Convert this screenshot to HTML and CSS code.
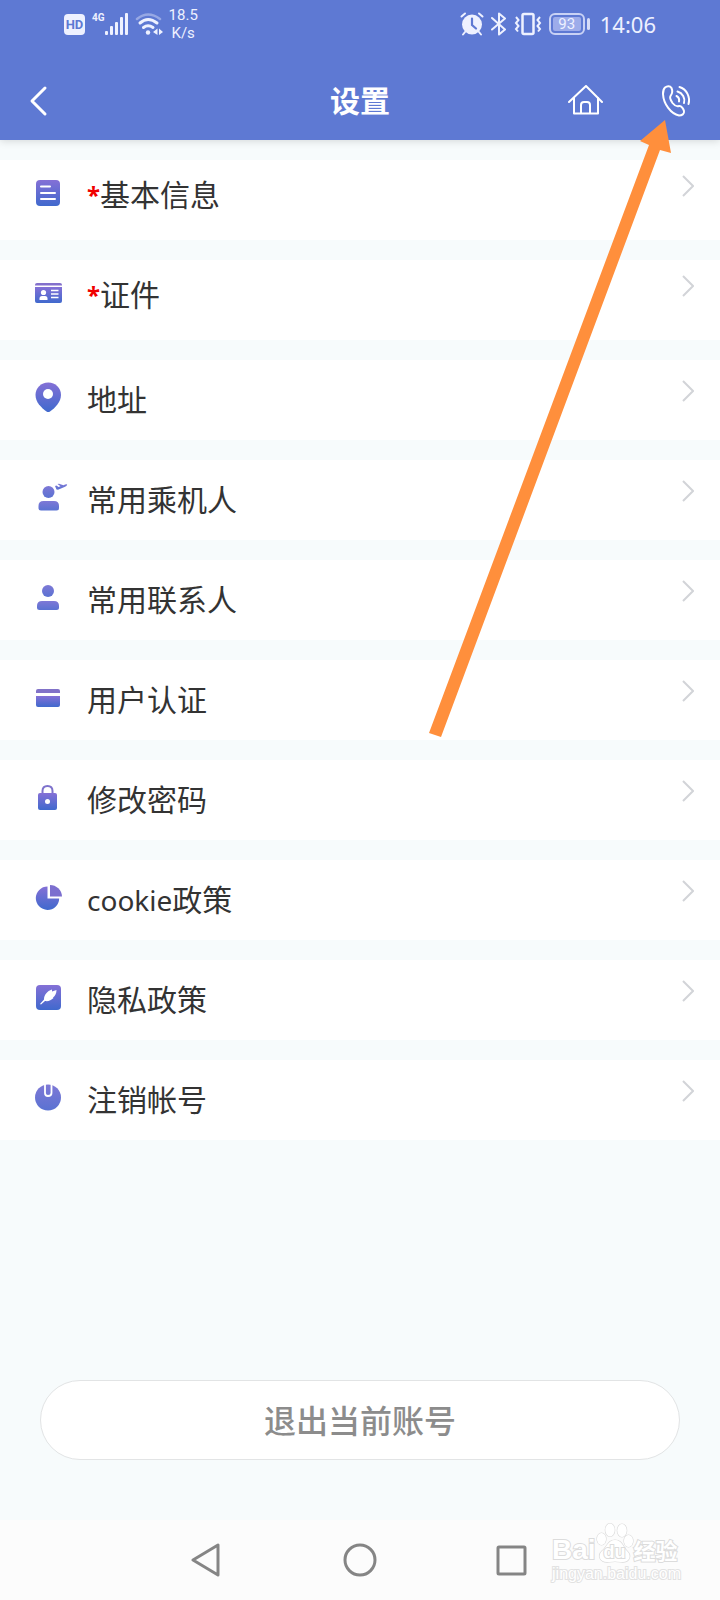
FILE: index.html
```html
<!DOCTYPE html>
<html lang="zh-CN">
<head>
    <meta charset="utf-8">
    <meta name="viewport" content="width=device-width, initial-scale=1">
    <title>设置</title>
    <link rel="stylesheet" href="styles.css">
</head>
<body>
    <!-- shared gradient for the list icons -->
    <svg class="defs" width="0" height="0" aria-hidden="true">
        <defs>
            <linearGradient id="grad" x1="0" y1="0" x2="0" y2="1">
                <stop offset="0" stop-color="#8470d6"/>
                <stop offset="1" stop-color="#4069cd"/>
            </linearGradient>
            <linearGradient id="soft" x1="0" y1="0" x2="0" y2="1">
                <stop offset="0" stop-color="#7e78d6"/>
                <stop offset="1" stop-color="#5a72d2"/>
            </linearGradient>
        </defs>
    </svg>

    <header class="header">
        <div class="status">
            <div class="status-left">
                <span class="hd">HD</span>
                <span class="net">4G</span>
                <svg class="signal" width="24" height="22" viewBox="0 0 24 22" fill="#eef1ff">
                    <rect x="0" y="18" width="3" height="4" rx="1"/>
                    <rect x="5" y="13" width="3" height="9" rx="1"/>
                    <rect x="10" y="9" width="3" height="13" rx="1"/>
                    <rect x="15" y="4" width="3" height="18" rx="1"/>
                    <rect x="20" y="0" width="3" height="22" rx="1"/>
                </svg>
                <svg class="wifi" width="28" height="22" viewBox="0 0 28 22" fill="none" stroke="#eef1ff" stroke-width="3" stroke-linecap="round">
                    <path d="M2 6Q13 -3 25 6" stroke-opacity=".4" stroke-width="2.5"/>
                    <path d="M5 10Q13 3 22 10"/>
                    <path d="M8.500 14.500Q13 11 18 14.500"/>
                    <circle cx="13" cy="19.500" r="2.200" fill="#eef1ff" stroke="none"/>
                    <path d="M22.500 15.500V22L18 19zM24 15.500V22L28 19z" fill="#eef1ff" stroke="none"/>
                </svg>
                <span class="speed">18.5<br>K/s</span>
            </div>
            <div class="status-right">
                <svg width="24" height="24" viewBox="0 0 24 24" fill="none" stroke="#eef1ff" stroke-width="2" stroke-linecap="round">
                    <circle cx="12" cy="12.500" r="10" fill="#eef1ff" stroke="none"/>
                    <path d="M1.500 4.500L5 1.500M19 1.500L22.500 4.500M5 20L3 22.500M19 20L21 22.500"/>
                    <path d="M12 6.500V13L16 16.500" stroke="#5e79d3" stroke-width="2.200"/>
                </svg>
                <svg width="16" height="24" viewBox="0 0 16 24" fill="none" stroke="#eef1ff" stroke-width="2" stroke-linejoin="round" stroke-linecap="round">
                    <path d="M1 6L14 17.500L8 22.500V1.500L14 6.500L1 17.500"/>
                </svg>
                <svg width="28" height="24" viewBox="0 0 28 24" fill="none" stroke="#eef1ff" stroke-width="2">
                    <rect x="8.500" y="2" width="11" height="20" rx="1.500" stroke-width="2.500"/>
                    <path d="M2 5L4.500 8L2 11L4.500 14L2 17L4 19.500" stroke-width="2"/>
                    <path d="M26 5L23.500 8L26 11L23.500 14L26 17L24 19.500" stroke-width="2"/>
                </svg>
                <span class="battery"><span class="level">93</span></span>
                <span class="time">14:06</span>
            </div>
        </div>
        <nav class="titlebar">
            <button class="icon-btn back" type="button" aria-label="返回">
                <svg width="20" height="32" viewBox="0 0 20 32" fill="none" stroke="#fff" stroke-width="3" stroke-linecap="round" stroke-linejoin="round">
                    <path d="M17 3L4 16L17 29"/>
                </svg>
            </button>
            <h1 class="title">设置</h1>
            <div class="actions">
                <a class="icon-btn" href="#" aria-label="首页">
                    <svg width="36" height="32" viewBox="0 0 36 32" fill="none" stroke="#fff" stroke-width="2" stroke-linejoin="round" stroke-linecap="round">
                        <path d="M1 17L18 1L34 17"/>
                        <path d="M6 13V28.500H30V13"/>
                        <path d="M13 28V20Q13 17 16 17H19Q22 17 22 20V28"/>
                    </svg>
                </a>
                <a class="icon-btn" href="#" aria-label="客服电话">
                    <svg width="30" height="32" viewBox="0 0 30 32" fill="none" stroke="#fff" stroke-width="2" stroke-linecap="round" stroke-linejoin="round">
                        <path d="M3 2.500C5 .8 8 .5 9.500 3C10.800 6 10.500 8.500 8.500 11C7.500 12.500 8.500 15 10.500 18C12.500 20.500 14.500 22 17 21C19.500 20.500 21.500 24 22 26C22.500 29 20 30.500 17 30.500C9 29 1.500 19 1 9C1 6.500 1.300 4 3 2.500Z"/>
                        <path d="M14.500 11C16.500 12 17.500 14 17 16.500"/>
                        <path d="M15.500 6.500C20.500 8 23.500 13 22 18"/>
                        <path d="M17.500 2C24.500 4 28.500 12 26.500 19"/>
                    </svg>
                </a>
            </div>
        </nav>
    </header>

    <main class="main">
        <ul class="list">
            <li>
                <a class="item required" href="#">
                    <svg class="icon" viewBox="0 0 40 40">
                        <rect x="8" y="7" width="24" height="26" rx="4" fill="url(#grad)"/>
                        <path d="M13 13.500H22M13 20H27M13 26H27" stroke="#fff" stroke-width="2" stroke-linecap="round"/>
                    </svg>
                    <span class="label"><span class="star">*</span>基本信息</span>
                    <svg class="arrow" viewBox="0 0 12 22"><path d="M1 1L11 11L1 21"/></svg>
                </a>
            </li>
            <li>
                <a class="item required" href="#">
                    <svg class="icon" viewBox="0 0 40 40">
                        <path d="M7 12.500V12Q7 10 9 10H32Q34 10 34 12V12.500z" fill="#8370cc"/>
                        <path d="M7 14H34V28Q34 30 32 30H9Q7 30 7 28z" fill="url(#grad)"/>
                        <circle cx="15.500" cy="19.500" r="2.600" fill="#fff"/>
                        <path d="M11.500 27V25.500Q11.500 23 14 23H17Q19.500 23 19.500 25.500V27z" fill="#fff"/>
                        <path d="M23 17.500H30.500M23 21H30.500M23 24.500H30.500" stroke="#fff" stroke-width="1.500"/>
                    </svg>
                    <span class="label"><span class="star">*</span>证件</span>
                    <svg class="arrow" viewBox="0 0 12 22"><path d="M1 1L11 11L1 21"/></svg>
                </a>
            </li>
            <li>
                <a class="item" href="#">
                    <svg class="icon" viewBox="0 0 40 40">
                        <path d="M20.300 4.500C27.500 4.500 33 10 33 17C33 24 27 30 22 33.500Q20.300 34.500 18.500 33.500C13 29.500 7.500 24 7.500 17C7.500 10 13 4.500 20.300 4.500z" fill="url(#grad)"/>
                        <circle cx="20" cy="16" r="5" fill="#fff"/>
                    </svg>
                    <span class="label">地址</span>
                    <svg class="arrow" viewBox="0 0 12 22"><path d="M1 1L11 11L1 21"/></svg>
                </a>
            </li>
            <li>
                <a class="item" href="#">
                    <svg class="icon" viewBox="0 0 40 40" fill="url(#soft)">
                        <circle cx="20.500" cy="14" r="6"/>
                        <path d="M10.500 30V28Q10.500 23 15.500 23H26Q31 23 31 28V30Q31 32.500 28.500 32.500H13Q10.500 32.500 10.500 30z"/>
                        <path d="M27 8L28.500 7.500L30.500 9L32.500 8.200L29.500 6L31 5.700L35.500 7.200Q38 6 39.200 6.500Q39 8 36.500 9L30 11.800L28.500 11.500z"/>
                    </svg>
                    <span class="label">常用乘机人</span>
                    <svg class="arrow" viewBox="0 0 12 22"><path d="M1 1L11 11L1 21"/></svg>
                </a>
            </li>
            <li>
                <a class="item" href="#">
                    <svg class="icon" viewBox="0 0 40 40" fill="url(#soft)">
                        <circle cx="20" cy="13" r="6"/>
                        <path d="M9 29.500V28Q9 23 14 23H26Q31 23 31 28V29.500Q31 32 28.500 32H11.500Q9 32 9 29.500z"/>
                    </svg>
                    <span class="label">常用联系人</span>
                    <svg class="arrow" viewBox="0 0 12 22"><path d="M1 1L11 11L1 21"/></svg>
                </a>
            </li>
            <li>
                <a class="item" href="#">
                    <svg class="icon" viewBox="0 0 40 40">
                        <path d="M8 15V13Q8 11 10 11H30Q32 11 32 13V15z" fill="#8172c8"/>
                        <path d="M8 18H32V27Q32 29 30 29H10Q8 29 8 27z" fill="url(#grad)"/>
                    </svg>
                    <span class="label">用户认证</span>
                    <svg class="arrow" viewBox="0 0 12 22"><path d="M1 1L11 11L1 21"/></svg>
                </a>
            </li>
            <li>
                <a class="item" href="#">
                    <svg class="icon" viewBox="0 0 40 40">
                        <path d="M14.500 16V13Q14.500 8 19.500 8Q24.500 8 24.500 13V16" fill="none" stroke="#7e72cc" stroke-width="2"/>
                        <rect x="10" y="15" width="19" height="17" rx="2" fill="url(#grad)"/>
                        <circle cx="19.500" cy="23.500" r="2.500" fill="#fff"/>
                    </svg>
                    <span class="label">修改密码</span>
                    <svg class="arrow" viewBox="0 0 12 22"><path d="M1 1L11 11L1 21"/></svg>
                </a>
            </li>
            <li>
                <a class="item" href="#">
                    <svg class="icon" viewBox="0 0 40 40">
                        <path d="M19.500 8.500V20.500H31.200A11.700 11.700 0 1 1 19.500 8.500z" fill="url(#grad)"/>
                        <path d="M22 7A12 12 0 0 1 34 18.500H22z" fill="#7c6fcf"/>
                    </svg>
                    <span class="label"><span class="latin">cookie</span>政策</span>
                    <svg class="arrow" viewBox="0 0 12 22"><path d="M1 1L11 11L1 21"/></svg>
                </a>
            </li>
            <li>
                <a class="item" href="#">
                    <svg class="icon" viewBox="0 0 40 40">
                        <rect x="8" y="7" width="25" height="25" rx="4" fill="url(#grad)"/>
                        <path d="M12 26L16 21.500C16 17 19 13 24 11.500L24 13.500L28.500 12C28.500 15.500 27 18 25 19.500L25.500 20C23 22.500 20.500 23.500 17 23L13 26.500z" fill="#fff"/>
                    </svg>
                    <span class="label">隐私政策</span>
                    <svg class="arrow" viewBox="0 0 12 22"><path d="M1 1L11 11L1 21"/></svg>
                </a>
            </li>
            <li>
                <a class="item" href="#">
                    <svg class="icon" viewBox="0 0 40 40">
                        <circle cx="20" cy="19.500" r="13" fill="url(#soft)"/>
                        <path d="M17 6V15Q17 18 20 18Q23.500 18 23.500 15V6" fill="none" stroke="#fff" stroke-width="1.800"/>
                    </svg>
                    <span class="label">注销帐号</span>
                    <svg class="arrow" viewBox="0 0 12 22"><path d="M1 1L11 11L1 21"/></svg>
                </a>
            </li>
        </ul>

        <button class="logout" type="button">退出当前账号</button>
    </main>

    <footer class="sysnav">
        <button class="icon-btn" type="button" aria-label="后退">
            <svg width="34" height="36" viewBox="0 0 34 36" fill="none" stroke="#858585" stroke-width="3" stroke-linejoin="round"><path d="M27 3V33L2 18z"/></svg>
        </button>
        <button class="icon-btn" type="button" aria-label="主屏幕">
            <svg width="34" height="36" viewBox="0 0 34 36" fill="none" stroke="#858585" stroke-width="3"><circle cx="17" cy="18" r="15"/></svg>
        </button>
        <button class="icon-btn" type="button" aria-label="最近任务">
            <svg width="34" height="36" viewBox="0 0 34 36" fill="none" stroke="#858585" stroke-width="3" stroke-linejoin="round"><rect x="3" y="5" width="27" height="27" rx="1"/></svg>
        </button>
        <div class="watermark">
            <div class="wm-logo">
                <span class="wm-bai">Bai</span>
                <span class="wm-paw">
                    <svg width="38" height="42" viewBox="0 0 38 42" fill="#fff" stroke="#dadada" stroke-width="1.200">
                        <ellipse cx="5.500" cy="17" rx="4.500" ry="6"/>
                        <ellipse cx="14" cy="8" rx="4.700" ry="6.500"/>
                        <ellipse cx="26" cy="8.500" rx="4.700" ry="6.500"/>
                        <ellipse cx="32.500" cy="19" rx="4.500" ry="6"/>
                        <path d="M19 18C26 18 27 25 31 29C37 35 32 41 25 40Q19 39 13 40C4 41 1 34 6 29C11 25 12 18 19 18z"/>
                    </svg>
                    <span class="wm-du">du</span>
                </span>
                <span class="wm-cn">经验</span>
            </div>
            <div class="wm-url">jingyan.baidu.com</div>
        </div>
    </footer>

    <!-- pointer to the phone button -->
    <svg class="pointer" width="260" height="640" viewBox="420 110 260 640" aria-hidden="true">
        <path d="M665 120L640 141L649 145L429 733L441 737L660 150L671 153z" fill="#ff8f3c"/>
    </svg>
</body>
</html>
```
FILE: styles.css
```css
* {box-sizing: border-box;}
body {
    position: relative;
    display: flex;
    flex-direction: column;
    min-height: 100vh;
    margin: 0;
    background-color: #f7fbfc;
    color: #333;
    font-family: "Noto Sans CJK SC", sans-serif;
}
svg {display: block; flex: none;}
.defs {position: absolute;}

/* header */
.header {
    position: relative;
    background-color: #5e79d3;
    color: #fff;
    box-shadow: 0 1px 8px rgba(0, 0, 0, 0.15);
}
.status {
    display: flex;
    justify-content: space-between;
    height: 62px;
    padding: 0 64px 14px 64px;
    color: #eef1ff;
    font-family: Roboto, sans-serif;
}
.status-left, .status-right {display: flex; align-items: center;}
.status-right {gap: 7px;}
.hd {
    width: 21px;
    margin-right: 7px;
    border-radius: 4px;
    background-color: #eef1ff;
    color: #5e79d3;
    font-size: 13px;
    font-weight: 700;
    line-height: 21px;
    text-align: center;
}
.net {
    align-self: flex-start;
    margin-top: 12px;
    font-size: 10px;
    font-weight: 700;
    line-height: 12px;
}
.wifi {margin: 0 6px;}
.speed {
    font-size: 15px;
    line-height: 18px;
    text-align: center;
}
.battery {
    position: relative;
    width: 36px;
    height: 22px;
    margin-right: 8px;
    padding: 2px;
    border: 2px solid #c9d2f5;
    border-radius: 6px;
}
.battery::after {
    content: "";
    position: absolute;
    top: 3px;
    right: -7px;
    width: 3px;
    height: 12px;
    border-radius: 2px;
    background-color: #d6dcf8;
}
.level {
    display: block;
    border-radius: 2px;
    background-color: #9dacea;
    font-size: 15px;
    line-height: 14px;
    text-align: center;
}
.time {font-family: "Noto Sans", sans-serif; font-size: 22px; line-height: 28px;}

.titlebar {
    display: grid;
    grid-template-columns: 1fr auto 1fr;
    align-items: center;
    height: 78px;
    padding: 0 28px;
}
.icon-btn {
    display: block;
    padding: 0;
    border: 0;
    background: none;
    cursor: pointer;
}
.back {justify-self: start;}
.title {margin: 0; padding-bottom: 4px; font-size: 30px; font-weight: 700; line-height: 44px;}
.actions {display: flex; justify-content: flex-end; gap: 58px;}

/* list */
.main {display: flex; flex: 1; flex-direction: column;}
.list {
    display: flex;
    flex-direction: column;
    gap: 20px;
    margin: 20px 0;
    padding: 0;
    list-style: none;
}
.item {
    display: flex;
    align-items: flex-start;
    height: 80px;
    padding: 18px 26px 0 28px;
    background-color: #fff;
    color: #333;
    text-decoration: none;
}
.required {padding-top: 13px;}
.icon {width: 40px; height: 40px;}
.label {flex: 1; margin-left: 19px; font-size: 30px; line-height: 40px;}
.star {color: #f00000; font-family: "Noto Sans", sans-serif; font-size: 24px; font-weight: 700; line-height: 20px; vertical-align: 2px;}
.latin {font-family: "Noto Sans", sans-serif; font-size: 28px; line-height: 20px;}
.arrow {
    width: 12px;
    height: 22px;
    margin-top: 2px;
    fill: none;
    stroke: #d2d4d8;
    stroke-width: 2;
}

.logout {
    height: 80px;
    margin: auto 40px 60px;
    padding-bottom: 4px;
    border: 1px solid #e2e4e5;
    border-radius: 40px;
    background-color: #fff;
    color: #8c8c8c;
    font-family: inherit;
    font-size: 32px;
    font-weight: 500;
    cursor: pointer;
}

/* system navigation */
.sysnav {
    position: relative;
    display: flex;
    align-items: center;
    justify-content: center;
    gap: 118px;
    height: 80px;
    background-color: #fcfcfc;
}
.watermark {position: absolute; right: 39px; bottom: 16px; color: #fff;}
.wm-logo {
    display: flex;
    align-items: flex-end;
    font-family: "Liberation Sans", sans-serif;
    font-weight: 700;
    -webkit-text-stroke: 2px #dcdcdc;
    paint-order: stroke fill;
}
.wm-bai {font-size: 28px; line-height: 28px;}
.wm-paw {position: relative;}
.wm-du {
    position: absolute;
    right: 0;
    bottom: 2px;
    left: 0;
    font-size: 18px;
    line-height: 20px;
    text-align: center;
}
.wm-cn {font-family: "Noto Sans CJK SC", sans-serif; font-size: 22px; line-height: 30px;}
.wm-url {
    font-family: "Liberation Sans", sans-serif;
    font-size: 16px;
    line-height: 20px;
    text-align: right;
    -webkit-text-stroke: 2px #e2e2e2;
    paint-order: stroke fill;
}

.pointer {position: absolute; top: 110px; right: 40px; pointer-events: none;}
```
